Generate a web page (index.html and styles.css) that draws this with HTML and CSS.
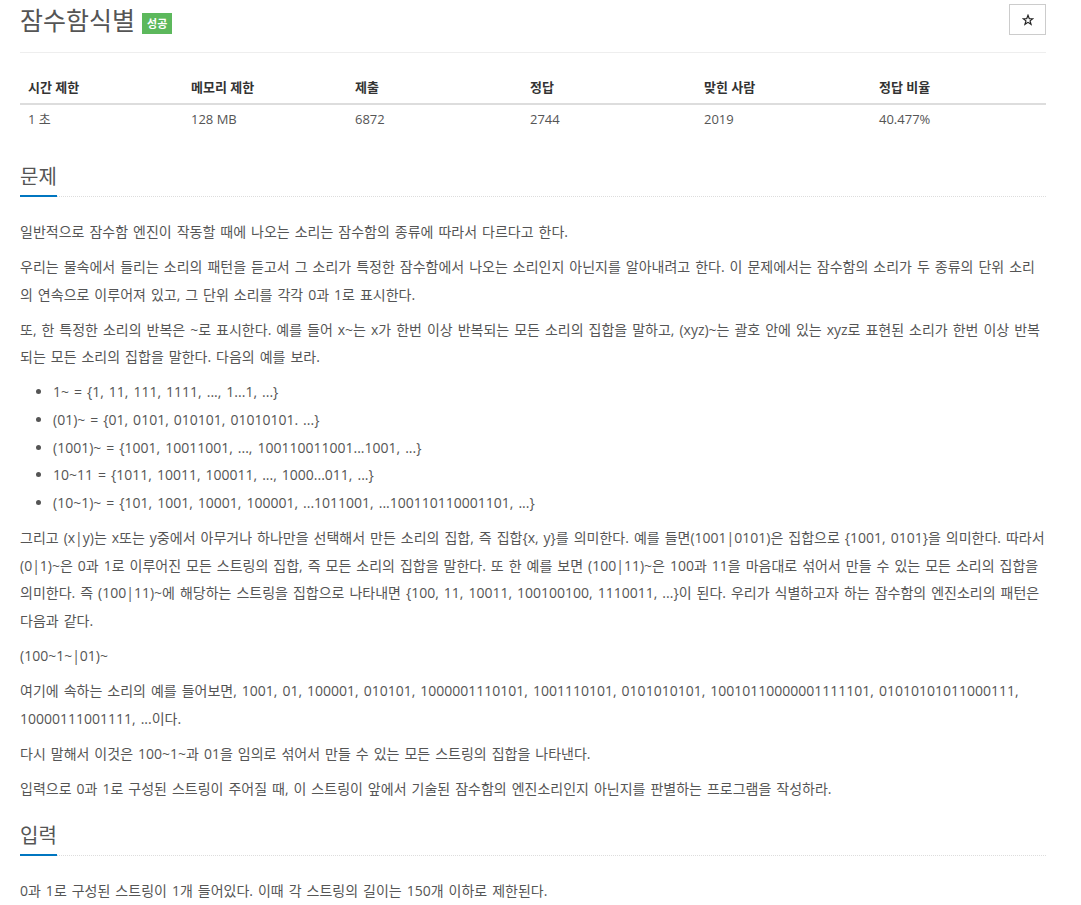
FILE: index.html
```html
<html>
  <head>
    <link rel="stylesheet" href="styles.css">
  </head>
  <body>
    <div class="page">
      <div class="page-header">
        <h1 class="title">잠수함식별 <span class="badge">성공</span></h1>
        <div class="star-btn">
          <svg width="12" height="12" viewBox="0 0 24 24">
            <polygon points="12,2.5 14.6,9.2 21.6,9.4 16.1,13.8 18.1,20.7 12,16.7 5.9,20.7 7.9,13.8 2.4,9.4 9.4,9.2" fill="none" stroke="#222" stroke-width="2.4" stroke-linejoin="miter"/>
          </svg>
        </div>
      </div>

      <table class="info">
        <thead>
          <tr>
            <th class="c1">시간 제한</th>
            <th class="c2">메모리 제한</th>
            <th class="c3">제출</th>
            <th class="c4">정답</th>
            <th class="c5">맞힌 사람</th>
            <th class="c6">정답 비율</th>
          </tr>
        </thead>
        <tbody>
          <tr>
            <td>1 초</td>
            <td>128 MB</td>
            <td>6872</td>
            <td>2744</td>
            <td>2019</td>
            <td>40.477%</td>
          </tr>
        </tbody>
      </table>

      <div class="headline"><h2>문제</h2></div>
      <div class="problem-text">
        <p>일반적으로 잠수함 엔진이 작동할 때에 나오는 소리는 잠수함의 종류에 따라서 다르다고 한다.</p>
        <p>우리는 물속에서 들리는 소리의 패턴을 듣고서 그 소리가 특정한 잠수함에서 나오는 소리인지 아닌지를 알아내려고 한다. 이 문제에서는 잠수함의 소리가 두 종류의 단위 소리의 연속으로 이루어져 있고, 그 단위 소리를 각각 0과 1로 표시한다.</p>
        <p>또, 한 특정한 소리의 반복은 ~로 표시한다. 예를 들어 x~는 x가 한번 이상 반복되는 모든 소리의 집합을 말하고, (xyz)~는 괄호 안에 있는 xyz로 표현된 소리가 한번 이상 반복되는 모든 소리의 집합을 말한다. 다음의 예를 보라.</p>
        <ul>
          <li>1~ = {1, 11, 111, 1111, ..., 1...1, ...}</li>
          <li>(01)~ = {01, 0101, 010101, 01010101. ...}</li>
          <li>(1001)~ = {1001, 10011001, ..., 100110011001...1001, ...}</li>
          <li>10~11 = {1011, 10011, 100011, ..., 1000...011, ...}</li>
          <li>(10~1)~ = {101, 1001, 10001, 100001, ...1011001, ...100110110001101, ...}</li>
        </ul>
        <p>그리고 (x|y)는 x또는 y중에서 아무거나 하나만을 선택해서 만든 소리의 집합, 즉 집합{x, y}를 의미한다. 예를 들면(1001|0101)은 집합으로 {1001, 0101}을 의미한다. 따라서 (0|1)~은 0과 1로 이루어진 모든 스트링의 집합, 즉 모든 소리의 집합을 말한다. 또 한 예를 보면 (100|11)~은 100과 11을 마음대로 섞어서 만들 수 있는 모든 소리의 집합을 의미한다. 즉 (100|11)~에 해당하는 스트링을 집합으로 나타내면 {100, 11, 10011, 100100100, 1110011, ...}이 된다. 우리가 식별하고자 하는 잠수함의 엔진소리의 패턴은 다음과 같다.</p>
        <p>(100~1~|01)~</p>
        <p>여기에 속하는 소리의 예를 들어보면, 1001, 01, 100001, 010101, 1000001110101, 1001110101, 0101010101, 10010110000001111101, 01010101011000111, 10000111001111, ...이다.</p>
        <p>다시 말해서 이것은 100~1~과 01을 임의로 섞어서 만들 수 있는 모든 스트링의 집합을 나타낸다.</p>
        <p>입력으로 0과 1로 구성된 스트링이 주어질 때, 이 스트링이 앞에서 기술된 잠수함의 엔진소리인지 아닌지를 판별하는 프로그램을 작성하라.</p>
      </div>

      <div class="headline"><h2>입력</h2></div>
      <div class="problem-text">
        <p>0과 1로 구성된 스트링이 1개 들어있다. 이때 각 스트링의 길이는 150개 이하로 제한된다.</p>
      </div>
    </div>
  </body>
</html>
```

FILE: styles.css
```css
body {
  margin: 0;
  background-color: white;
  font-family: "Open Sans", "Noto Sans CJK KR", sans-serif;
  color: #555;
}
.page {
  width: 1026px;
  padding: 0 20px;
}
.page-header {
  display: flex;
  justify-content: space-between;
  align-items: flex-start;
  border-bottom: 1px solid #eee;
  padding: 4px 0 16px 0;
  margin-bottom: 18px;
}
.title {
  margin: 0;
  font-size: 25px;
  font-weight: normal;
  color: #555;
  line-height: 32px;
  display: flex;
  align-items: center;
}
.badge {
  display: inline-block;
  background-color: #5cb85c;
  color: white;
  font-size: 11px;
  font-weight: bold;
  padding: 0 5px;
  height: 21px;
  line-height: 21px;
  margin-left: 7px;
  margin-top: 6px;
}
.star-btn {
  width: 35px;
  height: 29px;
  border: 1px solid #ccc;
  display: flex;
  align-items: center;
  justify-content: center;
}
.info {
  width: 100%;
  border-collapse: collapse;
  font-size: 13px;
  line-height: 20px;
  margin-bottom: 30px;
}
.info th {
  text-align: left;
  font-weight: bold;
  color: #333;
  padding: 6px 8px;
  border-bottom: 2px solid #ddd;
}
.info td {
  padding: 4px 8px;
  color: #555;
}
.c1 { width: 147px; }
.c2 { width: 148px; }
.c3 { width: 159px; }
.c4 { width: 158px; }
.c5 { width: 159px; }
.headline {
  border-bottom: 1px dotted #ddd;
  margin: 20px 0 21px 0;
}
.headline h2 {
  display: inline-block;
  margin: 0 0 -1px 0;
  padding-bottom: 4px;
  font-size: 20px;
  font-weight: normal;
  color: #555;
  line-height: 28px;
  border-bottom: 2px solid #0076c0;
}
.problem-text {
  font-size: 14px;
  line-height: 27.6px;
  word-spacing: 1.35px;
}
.problem-text p {
  margin: 0 0 7.5px 0;
}
.problem-text ul {
  margin: 0 0 7.5px 0;
  padding-left: 33px;
}
```
